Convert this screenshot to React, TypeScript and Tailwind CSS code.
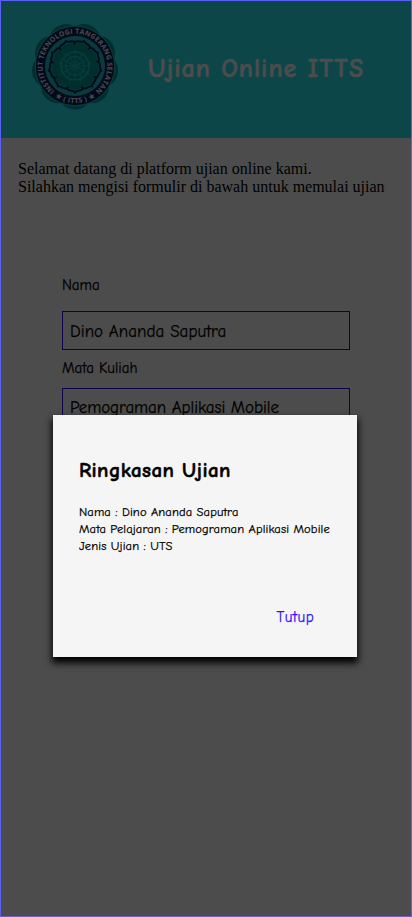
const comic = "font-['Comic_Sans_MS','Comic_Neue','Open_Sans',sans-serif]";

const spin = (n: number, offset = 0) => Array.from({ length: n }, (_, i) => offset + (i * 360) / n);

function Logo() {
  return (
    <svg viewBox="-44 -44 88 88" className="h-[88px] w-[88px] [-webkit-text-stroke-width:0px]" aria-label="ITTS">
      <defs>
        <path id="ring" d="M0 32.4 A32.4 32.4 0 1 1 0.01 32.4" />
        <path id="ringLow" d="M-37 0 A37 37 0 0 0 37 0" />
      </defs>
      {spin(9, 180).map((a) => (
        <ellipse key={a} cx="0" cy="-30" rx="15.6" ry="13.4" transform={`rotate(${a})`} fill="#009c98" />
      ))}
      <circle r="40.2" fill="#20c3c8" />
      <circle r="39.2" fill="#04225e" />
      <circle r="30" fill="#20c3c8" />
      {spin(9, 180).map((a) => (
        <path key={a} d="M-5 -14 C-9.5 -18 -9.5 -24 -4.5 -24.5 Q-1.5 -24.8 0 -26.5 Q1.5 -24.8 4.5 -24.5 C9.5 -24 9.5 -18 5 -14Z" transform={`rotate(${a})`} fill="#20c3c8" stroke="#04225e" strokeWidth="2" />
      ))}
      <circle r="20" fill="#20c3c8" />
      {spin(9, 180).map((a) => (
        <path key={a} d="M-3.6 -13 C-8.2 -18.5 -7.6 -22.6 -4 -22.9 Q-1 -23 0 -24.2 Q1 -23 4 -22.9 C7.6 -22.6 8.2 -18.5 3.6 -13Z" transform={`rotate(${a})`} fill="#009c98" />
      ))}
      <circle r="14" fill="#009c98" stroke="#20c3c8" strokeWidth="1.6" />
      <circle r="9.5" fill="none" stroke="#20c3c8" strokeWidth="1.4" />
      <circle r="4.5" fill="none" stroke="#20c3c8" strokeWidth="0.8" />
      {spin(12).map((a) => (
        <path key={a} d="M0 0V-14" transform={`rotate(${a})`} stroke="#20c3c8" strokeWidth="0.9" />
      ))}
      <text fill="#f4f4f4" textAnchor="middle" className="font-['Open_Sans',sans-serif] font-bold" fontSize="6.9">
        <textPath href="#ring" startOffset="50%" textLength="159">INSTITUT TEKNOLOGI TANGERANG SELATAN</textPath>
      </text>
      <text fill="#f4f4f4" textAnchor="middle" className="font-['Open_Sans',sans-serif] font-bold" fontSize="6.9">
        <textPath href="#ringLow" startOffset="50%" textLength="42">★ ( ITTS ) ★</textPath>
      </text>
    </svg>
  );
}

function Field({ label, value, labelClass, valueClass }: { label: string; value: string; labelClass: string; valueClass: string }) {
  return (
    <label className="block">
      <span className={`block whitespace-nowrap text-[15px] leading-[20px] ${labelClass}`}>{label}</span>
      <span className={`flex h-[39px] items-center whitespace-nowrap border border-[#3a00ff] pl-[7px] text-[17px] ${valueClass}`}>{value}</span>
    </label>
  );
}

export default function App() {
  return (
    <div className={`relative h-[917px] w-[412px] overflow-hidden bg-white text-black ${comic} [-webkit-text-stroke-width:0.25px]`}>
      <header className="flex h-[138px] bg-[#28e9f0] pl-[31px] pt-[22px]">
        <Logo />
        <h1 className="ml-[29px] mt-[29px] whitespace-nowrap text-[26px] font-bold leading-[36px] tracking-[1.02px] text-[#ffffff] [-webkit-text-stroke-width:0.5px]">Ujian Online ITTS</h1>
      </header>
      <p className="whitespace-nowrap pl-[18px] pt-[22px] font-['Liberation_Serif',serif] text-[16px] leading-[18px] [-webkit-text-stroke-width:0px]">
        Selamat datang di platform ujian online kami.
        <br />
        Silahkan mengisi formulir di bawah untuk memulai ujian
      </p>
      <form className="ml-[62px] mt-[79px] w-[288px]">
        <Field label="Nama" value="Dino Ananda Saputra" labelClass="mb-[16px]" valueClass="pt-[2px] tracking-[0.05px]" />
        <div className="h-[8px]" />
        <Field label="Mata Kuliah" value="Pemograman Aplikasi Mobile" labelClass="mb-[10px]" valueClass="pt-px tracking-[-0.07px]" />
      </form>
      <div className="absolute inset-0 bg-black/70" />
      <section className="absolute left-[53px] top-[415px] flex h-[242px] w-[304px] flex-col bg-[#f5f5f5] pl-[26px] pt-[40px] shadow-[0_5px_7px_1px_rgba(0,0,0,1)]">
        <h2 className="whitespace-nowrap text-[21px] font-bold leading-[31px] tracking-[0.38px] [-webkit-text-stroke-width:0.5px]">Ringkasan Ujian</h2>
        <p className="mt-[18px] whitespace-nowrap text-[12.5px] leading-[17px] tracking-[0.12px]">
          Nama : Dino Ananda Saputra
          <br />
          Mata Pelajaran : Pemograman Aplikasi Mobile
          <br />
          Jenis Ujian : UTS
        </p>
        <button className="mr-[43px] mt-[52px] self-end text-[15px] leading-[20px] tracking-[0.4px] text-[#2a10ff]">Tutup</button>
      </section>
      <div className="pointer-events-none absolute inset-0 border border-[#5a5ff5]" />
    </div>
  );
}
